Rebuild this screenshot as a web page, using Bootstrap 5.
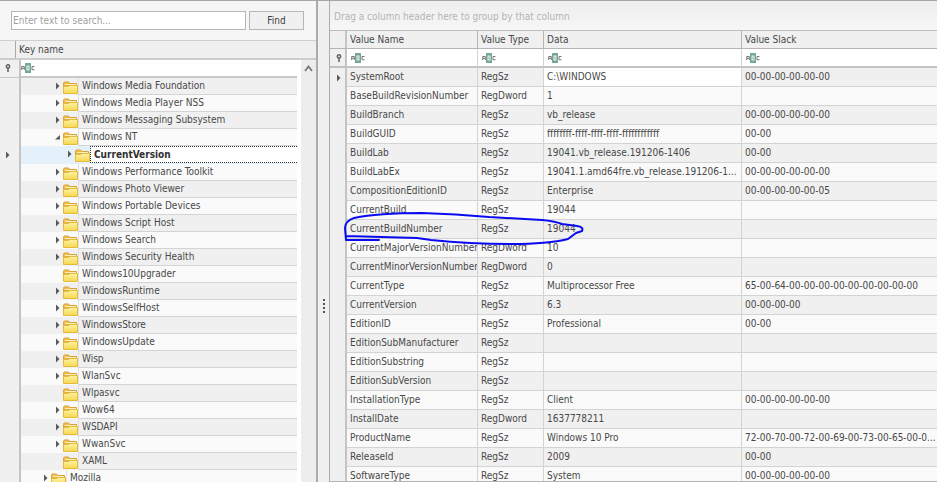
<!DOCTYPE html>
<html lang="en">
<head>
<meta charset="utf-8">
<meta name="viewport" content="width=device-width, initial-scale=1">
<title>Registry Explorer</title>
<link rel="stylesheet" href="https://cdn.jsdelivr.net/npm/bootstrap@5.3.0/dist/css/bootstrap.min.css">
<style>
body{font:10px/16px "DejaVu Sans Condensed","DejaVu Sans",sans-serif;color:#484848;background:#fff}
.app{border-top:1px solid #a6a6a6;background:#f0f0f0;margin-right:9px}
.tree-pane{flex:0 0 318px;border-right:2px solid #ababab;background:#f0f0f0}
.search-bar{height:40px;padding:10px 12px 0 11px;gap:3px;background:#f6f6f6;border-bottom:1px solid #cfcfcf}
.search-bar input{font-size:10px;line-height:16px;height:19px;padding:0 1px;border:1px solid #b5b5b5;border-radius:0;color:#484848}
.search-bar input::placeholder{color:#a0a0a0}
.search-bar button{font-size:10px;line-height:16px;flex:0 0 55px;height:19px;padding:0;border:1px solid #b5b5b5;border-radius:0;background:#f0f0f0;color:#404040}
.tree-head{height:19px;border-bottom:2px solid #cdcdcd}
.tree-head .corner{width:16px;border-right:1px solid #a9a9a9}
.tree-head .title{padding:1px 0 0 3px}
.gutter{flex:0 0 21px;border-right:2px solid #c4c4c4;background:#f0f0f0;padding-left:5px}
.tree-filter{height:18px}
.tree-filter .fill{border-bottom:2px solid #c8c8c8}
.tree-filter .gutter{border-bottom:1px solid #c8c8c8}
.tree-list{padding-right:4px;background:linear-gradient(#fff,#fff) right/4px 100% no-repeat}
.node{height:17px;background:#f0f0f0}
.node:nth-child(even){background:#fafafa}
.node .pad{flex:0 0 34px}
.node .exp{flex:0 0 8px;height:17px;padding:0;border:0;background:none;line-height:0;text-align:left}
.node .pic{flex:0 0 15px;height:17px;line-height:0;padding-top:3px}
.node .name{border-left:1px solid #e0e0e0;border-bottom:1px solid #d4d4d4;padding-left:3px;height:17px}
.node.deep .pad{flex-basis:46px}
.node.up .pad{flex-basis:22px}
.node.deep{height:18px;background:#e5f1fa}
.node.deep .name{background:#fff;border:1px dotted #333;border-right:0;font-weight:bold;color:#303030}
.scroll-col{flex:0 0 15px;background:#ededed;padding:4px 0 0;line-height:0;border:0}
.split{flex:0 0 11px;background:#f0f0f0;padding-top:128px}
.value-pane{border-left:1px solid #ababab;border-bottom:1px solid #b5b5b5}
.group-bar{height:30px;padding:8px 0 0 4px;color:#b4b4b4;background:linear-gradient(#eee,#f6f6f6);border-bottom:1px solid #bdbdbd}
.grid{table-layout:fixed;width:100%;border-collapse:separate;border-spacing:0}
.grid th,.grid td{height:19px;padding:0 0 0 3px;border-right:1px solid #d3d3d3;border-bottom:1px solid #d3d3d3;line-height:16px;white-space:nowrap;overflow:hidden;vertical-align:middle;font-weight:normal}
.grid thead th{height:18px;background:#f0f0f0;border-color:#b5b5b5}
.grid .filter td{height:19px;background:#fff;border-bottom:2px solid #c2c2c2;line-height:0}
.grid tbody tr{background:#fafafa}
.grid tbody tr:nth-child(odd){background:#f0f0f0}
.grid tr>:last-child{border-right:0}
.grid tr>:first-child{background:#f0f0f0;border-right:2px solid #c4c4c4;padding-left:6px;line-height:0}
.grid tbody tr>:first-child{border-bottom:0}
.grid tbody tr:first-child td:nth-child(4){background:#fff}
.c0{width:17px}.c1{width:131px}.c2{width:66px}.c3{width:198px}
.ink{left:0;top:0;pointer-events:none}
</style>
<script src="https://cdn.jsdelivr.net/npm/bootstrap@5.3.0/dist/js/bootstrap.bundle.min.js"></script>
</head>
<body>
<svg width="0" height="0" class="position-absolute" aria-hidden="true">
  <linearGradient id="gold" x1="0" y1="0" x2="0" y2="1"><stop offset="0" stop-color="#fff3a6"/><stop offset="1" stop-color="#f6d74e"/></linearGradient>
  <symbol id="folder" viewBox="0 0 15 13"><path d="M.5 12V2.5Q.5 1 1.5 1H5.5L7 2.500H13.500V5H.5" fill="#f0bd4c" stroke="#d9a137"/><path d="M2 3.500H13" stroke="#fff0b8"/><path d="M.5 5.500H5.500L7 4.500H14.500V12.500H.5Z" fill="url(#gold)" stroke="#e5bb3e"/></symbol>
  <symbol id="closed" viewBox="0 0 6 8"><path d="M1 .5V7.500L4.500 4Z" fill="#5a5a5a"/></symbol>
  <symbol id="open" viewBox="0 0 6 8"><path d="M0 6.500H5V2Z" fill="#5a5a5a"/></symbol>
  <symbol id="pin" viewBox="0 0 6 8"><path d="M3 4V8" stroke="#606060" stroke-width="1.500"/><circle cx="3" cy="2.500" r="1.700" fill="#ddd" stroke="#606060" stroke-width="1.400"/></symbol>
  <symbol id="match" viewBox="0 0 14 10"><path d="M.7 7V3.500H3.300V7M.7 5.300H3.300M13.500 3.500H11V6.700H13.500" fill="none" stroke="#777"/><rect x="4" width="6" height="10" rx=".5" fill="#73a794"/><rect x="5.500" y="2.500" width="3" height="5" fill="#e4f2ec"/><path d="M7 3.500V6.500" stroke="#73a794" stroke-width=".8"/></symbol>
</svg>
<main class="app d-flex vh-100 overflow-hidden">
  <section class="tree-pane d-flex flex-column" aria-label="Keys">
    <form class="search-bar d-flex" onsubmit="return false">
      <input class="form-control" type="text" placeholder="Enter text to search..." aria-label="Search text">
      <button class="btn" type="submit">Find</button>
    </form>
    <div class="tree-head d-flex flex-shrink-0"><span class="corner"></span><span class="title">Key name</span></div>
    <div class="d-flex flex-fill overflow-hidden">
      <div class="flex-fill overflow-hidden">
        <div class="tree-list">
          <div class="tree-filter d-flex"><span class="gutter d-flex align-items-center"><svg width="6" height="8"><use href="#pin"/></svg></span><span class="fill flex-fill d-flex align-items-center bg-white"><svg width="14" height="10"><use href="#match"/></svg></span></div>
          <div id="tree" role="tree"></div>
        </div>
      </div>
      <button type="button" class="scroll-col d-flex justify-content-center align-items-start" aria-label="Scroll up"><svg width="9" height="9"><path d="M1 7L4.500 2.500L8 7" fill="none" stroke="#777" stroke-width="1.800"/></svg></button>
    </div>
  </section>
  <div class="split d-flex align-items-center justify-content-center" role="separator"><svg width="2" height="14"><path d="M1 0V14" stroke="#555" stroke-width="2" stroke-dasharray="2 2"/></svg></div>
  <section class="value-pane flex-fill position-relative overflow-hidden" aria-label="Values">
    <div class="group-bar">Drag a column header here to group by that column</div>
    <table class="grid">
      <colgroup><col class="c0"><col class="c1"><col class="c2"><col class="c3"><col></colgroup>
      <thead>
        <tr><th></th><th scope="col">Value Name</th><th scope="col">Value Type</th><th scope="col">Data</th><th scope="col">Value Slack</th></tr>
        <tr class="filter"><td><svg width="6" height="8"><use href="#pin"/></svg></td><td><svg width="16" height="10"><use href="#match"/></svg></td><td><svg width="16" height="10"><use href="#match"/></svg></td><td><svg width="16" height="10"><use href="#match"/></svg></td><td><svg width="16" height="10"><use href="#match"/></svg></td></tr>
      </thead>
      <tbody id="values"></tbody>
    </table>
    <svg class="ink position-absolute" width="260" height="250" aria-hidden="true"><path d="M49 239H16L15 227Q15 220 24 217Q48 212 92 212Q126 213 159 216L212 219Q224 220 232 223L247 225Q254 226 252 230L246 232L238 238Q218 243 181 243Q140 243 101 239L87 237L16 235" fill="none" stroke="#0a0af0" stroke-width="2" stroke-linejoin="round" stroke-linecap="round"/></svg>
  </section>
</main>
<script>
// Tree entries: state (+ closed, - open, . leaf) followed by the key name
const keys = ["+Windows Media Foundation","+Windows Media Player NSS","+Windows Messaging Subsystem","-Windows NT","+CurrentVersion","+Windows Performance Toolkit","+Windows Photo Viewer","+Windows Portable Devices","+Windows Script Host","+Windows Search","+Windows Security Health",".Windows10Upgrader","+WindowsRuntime","+WindowsSelfHost","+WindowsStore","+WindowsUpdate","+Wisp","+WlanSvc",".Wlpasvc","+Wow64","+WSDAPI","+WwanSvc",".XAML","+Mozilla"];
const use = (id, w, h) => `<svg width="${w}" height="${h}"><use href="#${id}"/></svg>`;
document.getElementById("tree").innerHTML = keys.map(k => {
  const name = k.slice(1), sel = name === "CurrentVersion";
  const exp = k[0] === "." ? '<span class="exp"></span>' : `<button type="button" class="exp" aria-label="Toggle ${name}">${use(k[0] === "-" ? "open" : "closed", 6, 8)}</button>`;
  return `<div class="node d-flex ${sel ? "deep" : name === "Mozilla" ? "up" : ""}" role="treeitem"><span class="gutter d-flex align-items-center">${sel ? use("closed", 6, 8) : ""}</span><span class="pad"></span>${exp}<span class="pic">${use("folder", 15, 13)}</span><span class="name flex-fill">${name}</span></div>`;
}).join("");

const values = [
["SystemRoot","RegSz","C:\\WINDOWS","00-00-00-00-00-00"],
["BaseBuildRevisionNumber","RegDword","1",""],
["BuildBranch","RegSz","vb_release","00-00-00-00-00-00"],
["BuildGUID","RegSz","ffffffff-ffff-ffff-ffff-ffffffffffff","00-00"],
["BuildLab","RegSz","19041.vb_release.191206-1406","00-00"],
["BuildLabEx","RegSz","19041.1.amd64fre.vb_release.191206-1...","00-00-00-00-00-00"],
["CompositionEditionID","RegSz","Enterprise","00-00-00-00-00-05"],
["CurrentBuild","RegSz","19044",""],
["CurrentBuildNumber","RegSz","19044",""],
["CurrentMajorVersionNumber","RegDword","10",""],
["CurrentMinorVersionNumber","RegDword","0",""],
["CurrentType","RegSz","Multiprocessor Free","65-00-64-00-00-00-00-00-00-00-00-00"],
["CurrentVersion","RegSz","6.3","00-00-00-00"],
["EditionID","RegSz","Professional","00-00"],
["EditionSubManufacturer","RegSz","",""],
["EditionSubstring","RegSz","",""],
["EditionSubVersion","RegSz","",""],
["InstallationType","RegSz","Client","00-00-00-00-00-00"],
["InstallDate","RegDword","1637778211",""],
["ProductName","RegSz","Windows 10 Pro","72-00-70-00-72-00-69-00-73-00-65-00-0..."],
["ReleaseId","RegSz","2009","00-00"],
["SoftwareType","RegSz","System","00-00-00-00-00-00"]];
document.getElementById("values").innerHTML = values.map((r, i) => `<tr><td>${i ? "" : use("closed", 6, 8)}</td>${r.map(c => `<td>${c}</td>`).join("")}</tr>`).join("");
</script>
</body>
</html>
